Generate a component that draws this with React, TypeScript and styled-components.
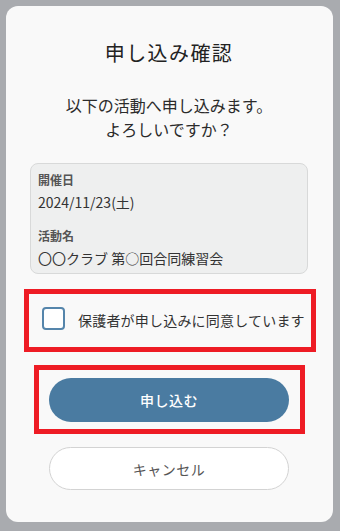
import React, { useState } from 'react';
import styled, { createGlobalStyle } from 'styled-components';

const GlobalStyle = createGlobalStyle`
	html, body {
		margin: 0;
		padding: 0;
		background: #a9abaf;
	}
	body {
		font-family: 'Noto Sans CJK JP', 'Noto Sans', sans-serif;
		color: #2b2b2b;
	}
	* {
		box-sizing: border-box;
	}
`;

const Backdrop = styled.div`
	padding: 6px 7px 9px 6px;
	min-height: 531px;
`;

const ModalCard = styled.div`
	width: 327px;
	background: #f9f9f9;
	border-radius: 12px;
	padding: 33px 25px 32px 24px;
	display: flex;
	flex-direction: column;
`;

const Title = styled.h1`
	margin: 0;
	font-size: 20px;
	line-height: 28px;
	font-weight: 400;
	letter-spacing: 1.4px;
	text-align: center;
	color: #222;
`;

const Message = styled.p`
	margin: 26px 0 0;
	font-size: 16px;
	line-height: 24px;
	text-align: center;
	color: #2b2b2b;
`;

const InfoBox = styled.dl`
	margin: 22px 0 0;
	height: 111px;
	background: #eeefef;
	border: 1px solid #d8d9d9;
	border-radius: 8px;
	padding: 7px 12px 5px 7px;
`;

const InfoLabel = styled.dt<{ $first?: boolean }>`
	margin-top: ${props => (props.$first ? '0' : '14px')};
	font-size: 12px;
	line-height: 18px;
	font-weight: 700;
	color: #555;
`;

const InfoValue = styled.dd`
	margin: 2px 0 0;
	font-size: 14px;
	line-height: 22px;
	color: #333;
`;

const Highlight = styled.div<{ $pad: string }>`
	border: 5px solid #ee1c25;
	padding: ${props => props.$pad};
`;

const ConsentRow = styled.label`
	display: flex;
	align-items: center;
	gap: 13px;
	height: 63px;
	margin: 15px -8px 0 -6px;
	padding: 0 8px 2px 13px;
	border: 5px solid #ee1c25;
	cursor: pointer;
`;

const CheckBox = styled.span<{ $checked: boolean }>`
	flex: none;
	width: 23px;
	height: 23px;
	margin-bottom: 3px;
	border: 2px solid #5585ab;
	border-radius: 4px;
	background: ${props => (props.$checked ? '#4a7ba1' : '#fff')};
	display: flex;
	align-items: center;
	justify-content: center;
`;

const ConsentText = styled.span`
	font-size: 14px;
	line-height: 20px;
	letter-spacing: 0.2px;
	color: #333;
	white-space: nowrap;
`;

const ButtonFrame = styled(Highlight)`
	width: 271px;
	margin: 13px auto 0;
	display: flex;
	justify-content: center;
`;

const PillButton = styled.button<{ $variant: 'primary' | 'ghost' }>`
	width: 240px;
	height: ${props => (props.$variant === 'primary' ? '44px' : '43px')};
	border-radius: 22px;
	font-family: inherit;
	font-size: 14px;
	font-weight: ${props => (props.$variant === 'primary' ? 500 : 400)};
	letter-spacing: 0.5px;
	cursor: pointer;
	border: ${props => (props.$variant === 'primary' ? 'none' : '1px solid #d3d3d3')};
	background: ${props => (props.$variant === 'primary' ? '#4a7ba1' : '#fff')};
	color: ${props => (props.$variant === 'primary' ? '#fff' : '#555')};
`;

const CancelWrap = styled.div`
	margin-top: 13px;
	display: flex;
	justify-content: center;
`;

const App: React.FC = () => {
	const [agreed, setAgreed] = useState(false);

	return (
		<>
			<GlobalStyle />
			<Backdrop>
				<ModalCard>
					<Title>申し込み確認</Title>
					<Message>
						以下の活動へ申し込みます。
						<br />
						よろしいですか？
					</Message>
					<InfoBox>
						<InfoLabel $first>開催日</InfoLabel>
						<InfoValue>2024/11/23(土)</InfoValue>
						<InfoLabel>活動名</InfoLabel>
						<InfoValue>〇〇クラブ 第○回合同練習会</InfoValue>
					</InfoBox>
					<ConsentRow onClick={() => setAgreed(!agreed)}>
						<CheckBox $checked={agreed}>
							{agreed && (
								<svg width="14" height="14" viewBox="0 0 24 24" fill="none" stroke="#fff" strokeWidth="3">
									<path d="M5 12l5 5 9-10" />
								</svg>
							)}
						</CheckBox>
						<ConsentText>保護者が申し込みに同意しています</ConsentText>
					</ConsentRow>
					<ButtonFrame $pad="8px 0 7px">
						<PillButton $variant="primary">申し込む</PillButton>
					</ButtonFrame>
					<CancelWrap>
						<PillButton $variant="ghost">キャンセル</PillButton>
					</CancelWrap>
				</ModalCard>
			</Backdrop>
		</>
	);
};

export default App;
